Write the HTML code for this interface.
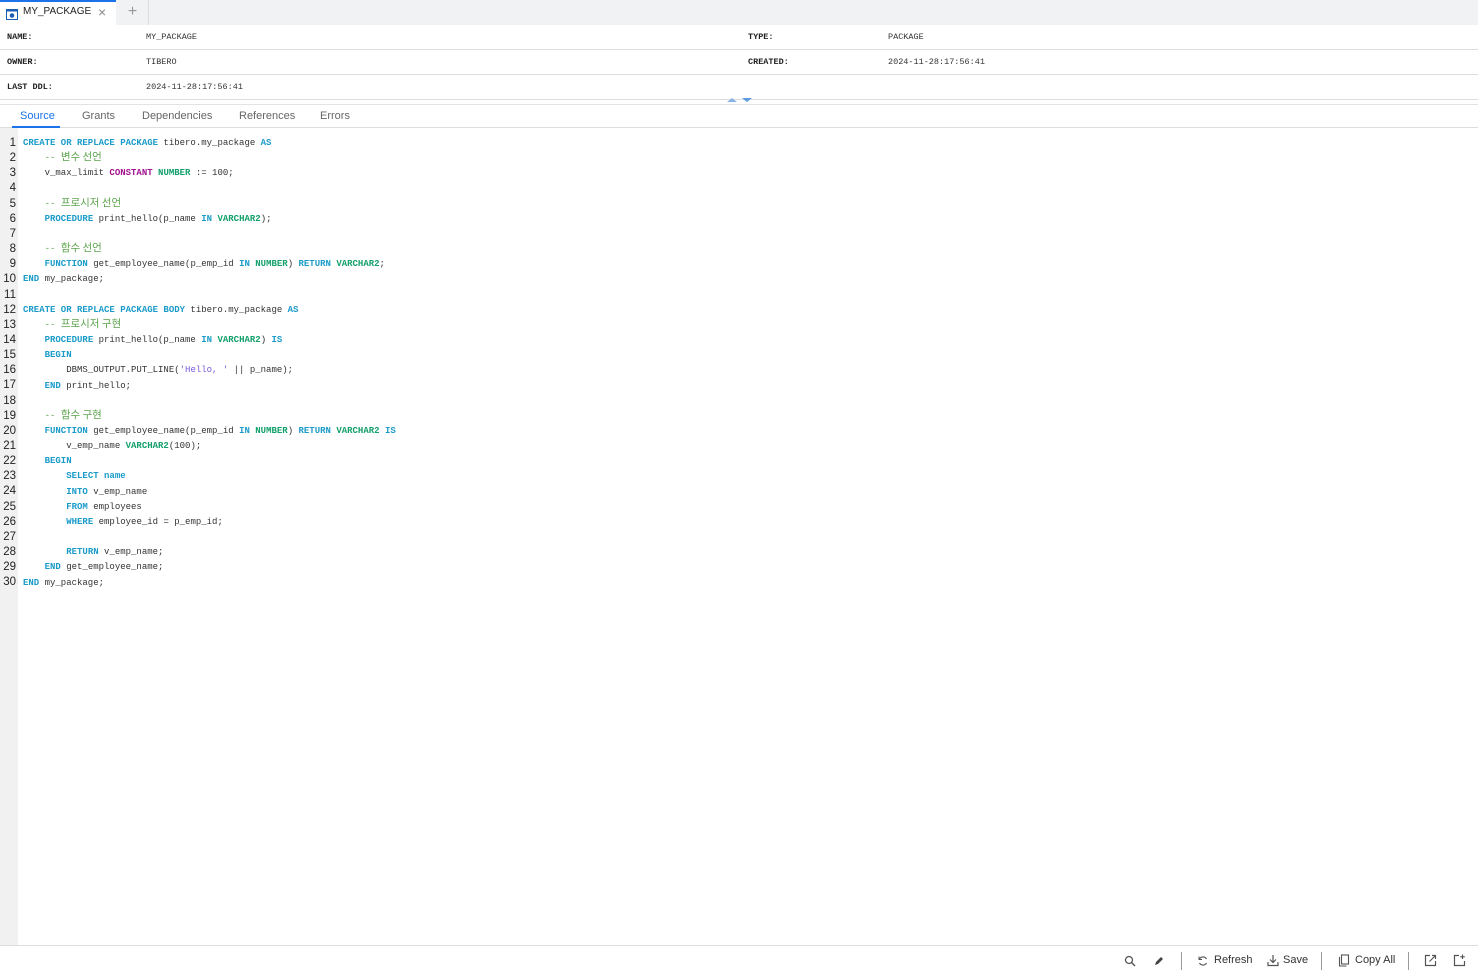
<!DOCTYPE html>
<html><head><meta charset="utf-8"><style>
*{margin:0;padding:0;box-sizing:border-box}
body{width:1478px;height:974px;background:#fff;font-family:"Liberation Sans","Noto Sans CJK KR",sans-serif;position:relative;overflow:hidden;color:#333}
.tabbar{position:absolute;left:0;top:0;width:1478px;height:25px;background:#f1f2f4}
.tab{position:absolute;left:0;top:0;width:116px;height:25px;background:#fff;border-top:2px solid #1a73e8;font-size:10px;color:#222}
.plus{position:absolute;left:117px;top:0;width:32px;height:25px;border-right:1px solid #ddd;color:#999;font-size:16px;text-align:center;line-height:24px}
.row{position:absolute;left:0;width:1478px;height:25px;border-bottom:1px solid #ddd;font-family:"Liberation Mono",monospace;font-size:8.5px;color:#333}
.row span{position:absolute;top:7px}
.row b{font-weight:bold;color:#222}
.subtabs{position:absolute;left:0;top:104px;width:1478px;height:24px;border-top:1px solid #e3e3e3;border-bottom:1px solid #ddd;font-size:11px;color:#666}
.subtabs span{position:absolute;top:5px}
.gutter{position:absolute;left:0;top:128px;width:18px;height:817px;background:#f1f1f1}
.code{position:absolute;left:0;top:136px;font-family:"Liberation Mono","Noto Sans CJK KR",monospace;font-size:9px;line-height:15.15px;color:#333;white-space:pre}
.ln{position:absolute;left:0;width:16px;text-align:right;font-family:"Liberation Sans",sans-serif;font-size:11.5px;color:#222}
.k{color:#1a9bc9;font-weight:bold}.t{color:#13a06b;font-weight:bold}.p{color:#a2128f;font-weight:bold}.c{color:#5aa34b}.s{color:#7a5ad8}
.h{font-size:10.5px;font-family:"Noto Sans CJK KR",sans-serif;line-height:10px}
.foot{position:absolute;left:0;top:945px;width:1478px;height:29px;border-top:1px solid #ddd;font-size:11px;color:#333}
.foot span{position:absolute;top:8px}
.sep{position:absolute;top:6px;width:1px;height:18px;background:#999}
</style></head><body>
<div class="tabbar">
 <div class="tab"><svg style="position:absolute;left:6px;top:6px" width="12" height="12" viewBox="0 0 12 12"><rect x="0.5" y="1.5" width="11" height="10" fill="none" stroke="#1a5fb4"/><rect x="0.5" y="1.5" width="11" height="2" fill="#1a5fb4"/><circle cx="6" cy="7.5" r="2.3" fill="#1a5fb4"/></svg><span style="position:absolute;left:23px;top:4px">MY_PACKAGE</span><span style="position:absolute;left:98px;top:2px;color:#888;font-size:14px">×</span></div>
 <div class="plus">+</div>
</div>
<div class="row" style="top:25px"><span style="left:7px"><b>NAME:</b></span><span style="left:146px">MY_PACKAGE</span><span style="left:748px"><b>TYPE:</b></span><span style="left:888px">PACKAGE</span></div>
<div class="row" style="top:50px"><span style="left:7px"><b>OWNER:</b></span><span style="left:146px">TIBERO</span><span style="left:748px"><b>CREATED:</b></span><span style="left:888px">2024-11-28:17:56:41</span></div>
<div class="row" style="top:75px"><span style="left:7px"><b>LAST DDL:</b></span><span style="left:146px">2024-11-28:17:56:41</span></div>
<svg style="position:absolute;left:726px;top:97px" width="28" height="6"><path d="M1 5L6 1L11 5Z" fill="#8ab4e8"/><path d="M16 1L26 1L21 5Z" fill="#5b9be0"/></svg>
<div class="subtabs"><span style="left:20px;color:#1a73e8">Source</span><span style="left:82px">Grants</span><span style="left:142px">Dependencies</span><span style="left:239px">References</span><span style="left:320px">Errors</span><div style="position:absolute;left:12px;top:21px;width:48px;height:2px;background:#1a73e8"></div></div>
<div class="gutter"></div>
<div class="code"><div style="position:absolute;left:0;top:0">
<div class="ln" style="top:0px">1</div><div class="ln" style="top:15.15px">2</div><div class="ln" style="top:30.3px">3</div><div class="ln" style="top:45.45px">4</div><div class="ln" style="top:60.6px">5</div><div class="ln" style="top:75.75px">6</div><div class="ln" style="top:90.9px">7</div><div class="ln" style="top:106.05px">8</div><div class="ln" style="top:121.2px">9</div><div class="ln" style="top:136.35px">10</div><div class="ln" style="top:151.5px">11</div><div class="ln" style="top:166.65px">12</div><div class="ln" style="top:181.8px">13</div><div class="ln" style="top:196.95px">14</div><div class="ln" style="top:212.1px">15</div><div class="ln" style="top:227.25px">16</div><div class="ln" style="top:242.4px">17</div><div class="ln" style="top:257.55px">18</div><div class="ln" style="top:272.7px">19</div><div class="ln" style="top:287.85px">20</div><div class="ln" style="top:303px">21</div><div class="ln" style="top:318.15px">22</div><div class="ln" style="top:333.3px">23</div><div class="ln" style="top:348.45px">24</div><div class="ln" style="top:363.6px">25</div><div class="ln" style="top:378.75px">26</div><div class="ln" style="top:393.9px">27</div><div class="ln" style="top:409.05px">28</div><div class="ln" style="top:424.2px">29</div><div class="ln" style="top:439.35px">30</div>
</div><div style="position:absolute;left:23px;top:0"><span class="k">CREATE OR REPLACE PACKAGE</span> tibero.my_package <span class="k">AS</span>
    <span class="c">-- <span class="h">변수 선언</span></span>
    v_max_limit <span class="p">CONSTANT</span> <span class="t">NUMBER</span> := 100;

    <span class="c">-- <span class="h">프로시저 선언</span></span>
    <span class="k">PROCEDURE</span> print_hello(p_name <span class="k">IN</span> <span class="t">VARCHAR2</span>);

    <span class="c">-- <span class="h">함수 선언</span></span>
    <span class="k">FUNCTION</span> get_employee_name(p_emp_id <span class="k">IN</span> <span class="t">NUMBER</span>) <span class="k">RETURN</span> <span class="t">VARCHAR2</span>;
<span class="k">END</span> my_package;

<span class="k">CREATE OR REPLACE PACKAGE BODY</span> tibero.my_package <span class="k">AS</span>
    <span class="c">-- <span class="h">프로시저 구현</span></span>
    <span class="k">PROCEDURE</span> print_hello(p_name <span class="k">IN</span> <span class="t">VARCHAR2</span>) <span class="k">IS</span>
    <span class="k">BEGIN</span>
        DBMS_OUTPUT.PUT_LINE(<span class="s">'Hello, '</span> || p_name);
    <span class="k">END</span> print_hello;

    <span class="c">-- <span class="h">함수 구현</span></span>
    <span class="k">FUNCTION</span> get_employee_name(p_emp_id <span class="k">IN</span> <span class="t">NUMBER</span>) <span class="k">RETURN</span> <span class="t">VARCHAR2</span> <span class="k">IS</span>
        v_emp_name <span class="t">VARCHAR2</span>(100);
    <span class="k">BEGIN</span>
        <span class="k">SELECT</span> <span class="k">name</span>
        <span class="k">INTO</span> v_emp_name
        <span class="k">FROM</span> employees
        <span class="k">WHERE</span> employee_id = p_emp_id;

        <span class="k">RETURN</span> v_emp_name;
    <span class="k">END</span> get_employee_name;
<span class="k">END</span> my_package;</div></div>
<div class="foot">
 <svg style="position:absolute;left:1124px;top:9px" width="12" height="12" viewBox="0 0 12 12"><circle cx="5" cy="5" r="3.5" fill="none" stroke="#555" stroke-width="1.3"/><path d="M7.5 7.5L11 11" stroke="#555" stroke-width="1.5"/></svg>
 <svg style="position:absolute;left:1153px;top:9px" width="12" height="12" viewBox="0 0 12 12"><path d="M2 10L3 7L8 2L10 4L5 9Z" fill="#444"/></svg>
 <div class="sep" style="left:1181px"></div>
 <svg style="position:absolute;left:1197px;top:9px" width="12" height="12" viewBox="0 0 12 12"><path d="M9.5 4A4 4 0 0 0 2.5 4M2.5 8A4 4 0 0 0 9.5 8" fill="none" stroke="#555" stroke-width="1.2"/><path d="M2 1.5V4.5H5" fill="none" stroke="#555"/></svg>
 <span style="left:1214px">Refresh</span>
 <svg style="position:absolute;left:1267px;top:8px" width="12" height="13" viewBox="0 0 12 13"><path d="M6 1V8M3 5.5L6 8.5L9 5.5M1 8V11.5H11V8" fill="none" stroke="#555" stroke-width="1.2"/></svg>
 <span style="left:1283px">Save</span>
 <div class="sep" style="left:1321px"></div>
 <svg style="position:absolute;left:1338px;top:8px" width="12" height="13" viewBox="0 0 12 13"><rect x="3.5" y="1" width="7" height="9" fill="none" stroke="#555" stroke-width="1.1"/><path d="M1.5 3V12H8.5" fill="none" stroke="#555" stroke-width="1.1"/></svg>
 <span style="left:1355px">Copy All</span>
 <div class="sep" style="left:1408px"></div>
 <svg style="position:absolute;left:1424px;top:8px" width="13" height="13" viewBox="0 0 13 13"><path d="M6 1.5H1.5V11.5H11.5V7M8 1.5H11.5V5M11.5 1.5L5.5 7.5" fill="none" stroke="#555" stroke-width="1.2"/></svg>
 <svg style="position:absolute;left:1453px;top:8px" width="13" height="13" viewBox="0 0 13 13"><path d="M6 1.5H1.5V11.5H11.5V7M9.5 0.5V5M7.2 2.8H11.8" fill="none" stroke="#555" stroke-width="1.2"/></svg>
</div>
</body></html>
